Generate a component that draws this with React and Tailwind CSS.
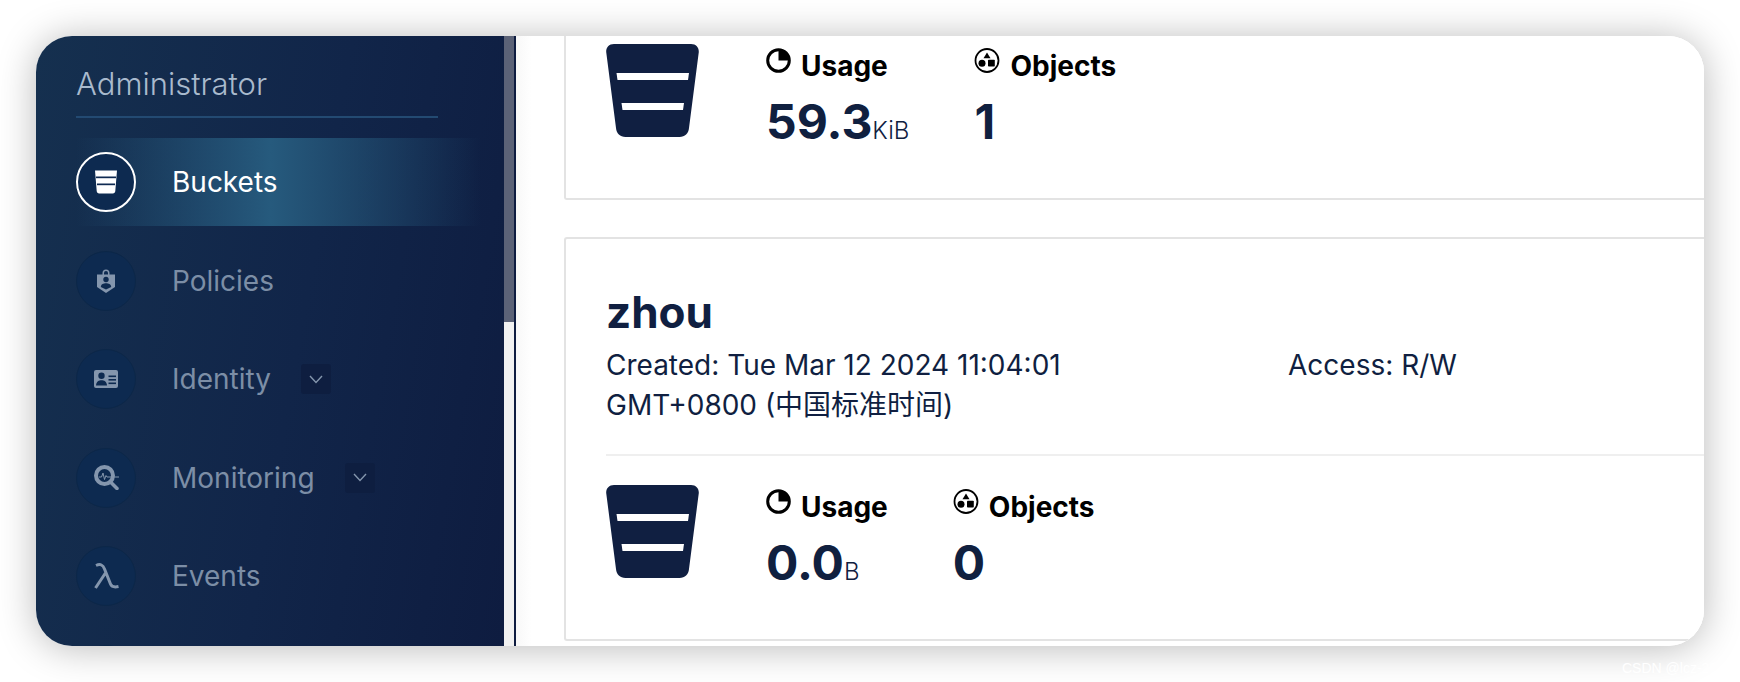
import React from "react";

function BucketIcon() {
  return (
    <svg width="93" height="93" viewBox="0 0 93 93" className="shrink-0">
      <path
        d="M8 0H85C90 0 93 3.500 92.800 8L83 84C82.500 89.500 79 93 73.500 93H19.500C14 93 10.500 89.500 10 84L0.200 8C0 3.500 3 0 8 0Z"
        fill="#101f41"
      />
      <path d="M10.500 29H83L82 36H11.500Z" fill="#fff" />
      <path d="M15.500 59H78L77 66H16.500Z" fill="#fff" />
    </svg>
  );
}

function UsageIcon() {
  return (
    <svg width="25" height="25" viewBox="0 0 25 25" className="shrink-0">
      <circle cx="12.500" cy="12.500" r="10.800" fill="none" stroke="#000" strokeWidth="3" />
      <path d="M12.500 2A10.500 10.500 0 0 1 23 12.500H12.500Z" fill="#000" />
    </svg>
  );
}

function ObjectsIcon() {
  return (
    <svg width="26" height="25" viewBox="0 0 26 25" className="shrink-0">
      <circle cx="13" cy="12.500" r="11.500" fill="none" stroke="#000" strokeWidth="1.800" />
      <path d="M13 4.500L16.500 10.300H9.500Z" fill="#000" />
      <circle cx="8" cy="15.200" r="3.500" fill="#000" />
      <rect x="14" y="11.800" width="6.800" height="6.800" rx="0.800" fill="#000" />
    </svg>
  );
}

function NavBucket() {
  return (
    <svg width="24" height="24" viewBox="0 0 24 24">
      <path d="M1 0.500H23L21.300 21C21.200 22.500 20.300 23.500 18.800 23.500H5.200C3.700 23.500 2.800 22.500 2.700 21Z" fill="#fff" />
      <rect x="2" y="6.500" width="20" height="1.700" fill="#0f2a52" />
      <rect x="3" y="13.500" width="18" height="1.700" fill="#0f2a52" />
    </svg>
  );
}

function NavPolicy() {
  return (
    <svg width="20" height="26" viewBox="0 0 20 26" fill="#8496ad">
      <path d="M6.500 7V5a3.500 3.500 0 0 1 7 0v2h-1.500V5a2 2 0 0 0-4 0v2Z" />
      <path d="M1 6.500H19V19L10 25L1 19Z" />
      <circle cx="10" cy="11.500" r="2.700" fill="#0d2a50" />
      <path d="M4.800 19C5 16 7.500 15.300 10 15.300S15 16 15.200 19L10 21.500Z" fill="#0d2a50" />
    </svg>
  );
}

function NavIdentity() {
  return (
    <svg width="24" height="18" viewBox="0 0 24 18">
      <rect width="24" height="18" rx="2" fill="#8496ad" />
      <circle cx="7.500" cy="5.800" r="3.200" fill="#0d2a50" />
      <path d="M2 15.500C2.300 11.500 5 10.300 7.500 10.300S12.700 11.500 13 15.500Z" fill="#0d2a50" />
      <rect x="14.500" y="5.500" width="7.500" height="1.600" fill="#0d2a50" />
      <rect x="14.500" y="9" width="7.500" height="1.600" fill="#0d2a50" />
      <rect x="14.500" y="12.500" width="7.500" height="1.600" fill="#0d2a50" />
    </svg>
  );
}

function NavMonitoring() {
  return (
    <svg width="25" height="25" viewBox="0 0 25 25" fill="none">
      <circle cx="10.500" cy="10.500" r="8.500" stroke="#8496ad" strokeWidth="4" />
      <path d="M16.500 17L23 23.500" stroke="#8496ad" strokeWidth="3.500" strokeLinecap="round" />
      <path d="M5 12H7.500L9 8L10.500 14.500L12 10.500L13 12H25" stroke="#8496ad" strokeWidth="1" />
    </svg>
  );
}

function NavLambda() {
  return (
    <svg width="25" height="26" viewBox="0 0 25 26" fill="none">
      <path
        d="M2 2.500C6.500 0.500 9 2 10.500 6L16.500 21C17.700 24 20 24.500 24.500 23.500M11.800 9.500L1.500 25"
        stroke="#8496ad"
        strokeWidth="3"
      />
    </svg>
  );
}

function Chevron() {
  return (
    <svg width="14" height="9" viewBox="0 0 14 9" fill="none">
      <path d="M1 1L7 7.500L13 1" stroke="#8496ad" strokeWidth="1.400" />
    </svg>
  );
}

const navItems = [
  { label: "Buckets", icon: <NavBucket />, active: true },
  { label: "Policies", icon: <NavPolicy /> },
  { label: "Identity", icon: <NavIdentity />, chevron: true },
  { label: "Monitoring", icon: <NavMonitoring />, chevron: true },
  { label: "Events", icon: <NavLambda /> },
  { label: "", icon: null },
];

function NavItem({ item }) {
  return (
    <div
      className={`flex h-[88px] w-[405px] shrink-0 items-center ${
        item.active
          ? "bg-[linear-gradient(90deg,rgba(38,90,125,0)_0%,#265a7d_48%,rgba(38,90,125,0)_100%)]"
          : ""
      }`}
    >
      <div
        className={`flex h-[60px] w-[60px] shrink-0 items-center justify-center rounded-full bg-[#0d2a50] ${
          item.active ? "border-[2px] border-white" : "border border-[#0c2748]"
        }`}
      >
        {item.icon}
      </div>
      {item.label && (
        <span
          className={`ml-[36px] text-[28px] leading-none ${
            item.active ? "text-white" : "text-[#7c8ea6]"
          }`}
        >
          {item.label}
        </span>
      )}
      {item.chevron && (
        <span className="ml-[30px] flex h-[30px] w-[30px] items-center justify-center rounded-[3px] bg-[#0e1e40]">
          <Chevron />
        </span>
      )}
    </div>
  );
}

function Sidebar() {
  return (
    <aside className="flex w-[468px] shrink-0 flex-col overflow-hidden bg-[linear-gradient(100deg,#15304f_0%,#112549_55%,#0e1c40_100%)] pl-[40px]">
      <div className="flex h-[82px] w-[362px] shrink-0 items-end border-b-[2px] border-[#234a72] pb-[17px] text-[31px] font-light leading-none text-[#a9bacd]">
        Administrator
      </div>
      <div className="mt-[20px] flex flex-col gap-[10.500px]">
        {navItems.map((item, i) => (
          <NavItem key={i} item={item} />
        ))}
      </div>
    </aside>
  );
}

function Stat({ icon, label, value, unit }) {
  return (
    <div className="flex flex-col">
      <div className="mt-[4px] flex items-start gap-[10px] text-[28px] font-bold leading-[28px] text-black">
        {icon}
        <span className="pt-[4px]">{label}</span>
      </div>
      <div className="mt-[17px] flex items-baseline text-[#10203f]">
        <span className="text-[48px] font-bold leading-[50px]">{value}</span>
        {unit && <span className="text-[24px] font-light leading-none">{unit}</span>}
      </div>
    </div>
  );
}

function BucketStats({ usage, unit, objects, topPad }) {
  return (
    <div className={`flex ${topPad} pb-[51px]`}>
      <BucketIcon />
      <div className="ml-[67px] flex gap-[65px]">
        <Stat icon={<UsageIcon />} label="Usage" value={usage} unit={unit} />
        <Stat icon={<ObjectsIcon />} label="Objects" value={objects} />
      </div>
    </div>
  );
}

export default function App() {
  return (
    <div
      className="relative h-[682px] w-[1740px] overflow-hidden bg-white p-[36px]"
      style={{ fontFamily: 'Inter, "Noto Sans CJK SC", sans-serif' }}
    >
      <div className="flex h-[610px] overflow-hidden rounded-[36px] bg-white shadow-[0_2px_38px_rgba(0,0,0,0.28)]">
        <Sidebar />
        {/* scrollbar */}
        <div className="flex w-[10px] shrink-0 flex-col bg-[#f1f1f1]">
          <div className="h-[286px] bg-[#5b6277]" />
        </div>
        <div className="w-[2px] shrink-0 bg-[#0e1c40]" />

        <main className="flex-1 overflow-hidden bg-[linear-gradient(90deg,#f8f8f8,#ffffff_16px)] pl-[48px]">
          {/* first card is scrolled partly out of view */}
          <div className="rounded-bl-[3px] border-b-[2px] border-l-[2px] border-[#e3e3e3] bg-white pl-[40px]">
            <BucketStats usage="59.3" unit="KiB" objects="1" topPad="pt-[8px]" />
          </div>

          <div className="mt-[37px] rounded-l-[3px] border-y-[2px] border-l-[2px] border-[#e3e3e3] bg-white pl-[40px] text-[#101f41]">
            <div className="border-b-[2px] border-[#efefef] pt-[48px] pb-[29px]">
              <h2 className="text-[44px] font-bold leading-[50px]">zhou</h2>
              <div className="mt-[8px] flex text-[28px] leading-[40px]">
                <div className="w-[682px]">
                  <div>Created: Tue Mar 12 2024 11:04:01</div>
                  <div>GMT+0800 (中国标准时间)</div>
                </div>
                <div>Access: R/W</div>
              </div>
            </div>
            <BucketStats usage="0.0" unit="B" objects="0" topPad="pt-[29px]" />
          </div>
        </main>
      </div>
      <span className="absolute left-[1622px] top-[658px] text-[14px] text-white" style={{ fontFamily: '"Liberation Sans", sans-serif' }}>
        CSDN @lcz-20
      </span>
    </div>
  );
}
